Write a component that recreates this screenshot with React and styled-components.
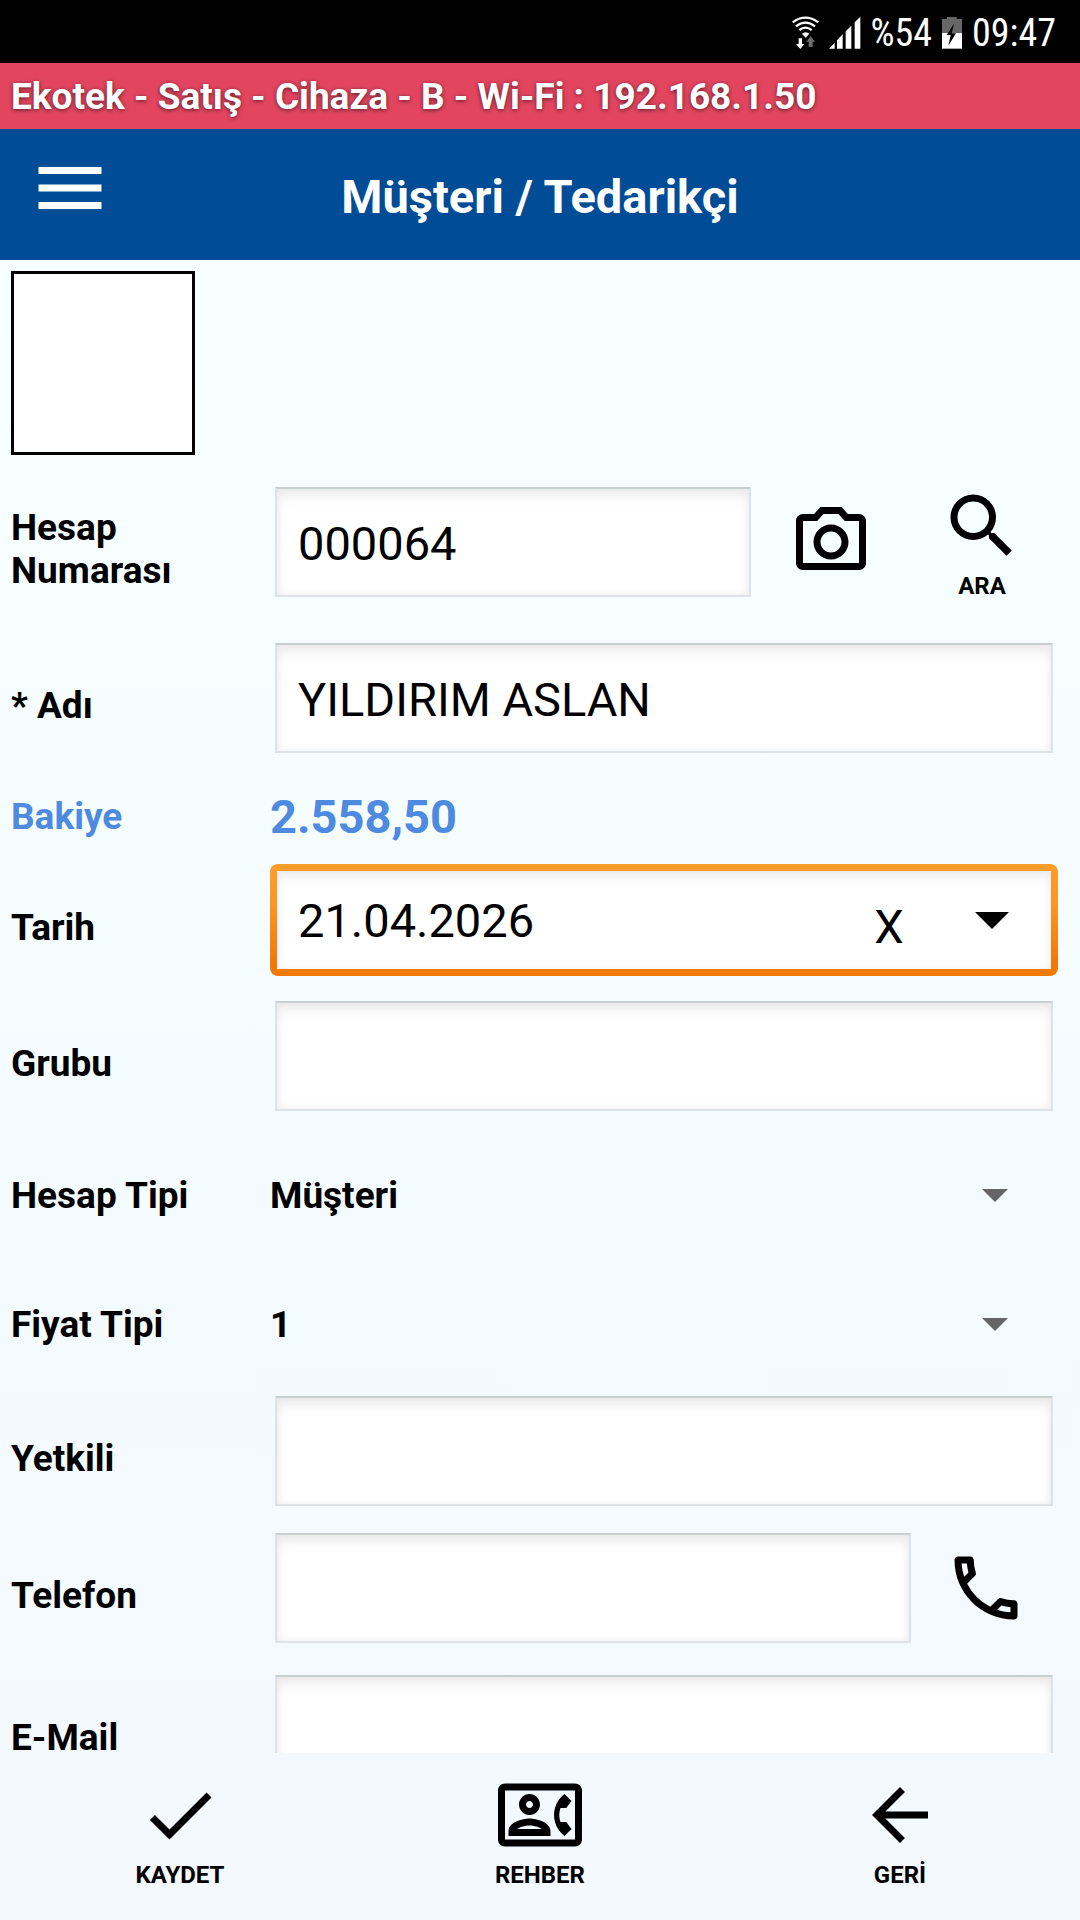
import styled, { createGlobalStyle, css } from "styled-components"
import {
  MdArrowBack,
  MdCheck,
  MdMenu,
  MdOutlineCall,
  MdOutlineCameraAlt,
  MdOutlineContactPhone,
  MdSearch,
} from "react-icons/md"

const GlobalStyle = createGlobalStyle`
  * {
    box-sizing: border-box;
  }

  body {
    margin: 0;
    font-family: Roboto, sans-serif;
    color: #000;
  }

  button, input, select {
    font-family: inherit;
    color: inherit;
    margin: 0;
    padding: 0;
  }
`;

const Screen = styled.div`
  display: flex;
  flex-direction: column;
  height: 100vh;
  background: #f4f8ff;
`;

const StatusBar = styled.div`
  display: flex;
  align-items: center;
  justify-content: flex-end;
  gap: 10px;
  height: 63px;
  padding: 2px 24px 0;
  background: #000;
  color: #fff;
  font-family: "Roboto Condensed", Roboto, sans-serif;
  font-size: 38px;
`;

const ConnectionBar = styled.div`
  height: 66px;
  padding: 1px 11px 0;
  background: #e3455f;
  color: #fff;
  font-size: 37px;
  font-weight: 700;
  line-height: 66px;
  text-shadow: 0 1px 4px rgba(0, 0, 0, 0.6);
  white-space: nowrap;
`;

const Header = styled.header`
  display: grid;
  grid-template-columns: 112px 1fr 112px;
  align-items: center;
  height: 131px;
  background: #004c97;
  color: #fff;
`;

const Title = styled.h1`
  margin: 0;
  padding-top: 4px;
  font-size: 47px;
  font-weight: 700;
  text-align: center;
`;

const IconButton = styled.button`
  display: flex;
  flex: none;
  flex-direction: column;
  align-items: center;
  justify-content: center;
  gap: 4px;
  border: 0;
  background: none;
  font-size: 24px;
  font-weight: 700;
  line-height: 28px;

  svg {
    width: 84px;
    height: 84px;
    flex: none;
  }
`;

const MenuButton = styled(IconButton)`
  width: 84px;
  margin-left: 28px;
  padding-bottom: 14px;
`;

const CameraButton = styled(IconButton)`
  width: 160px;
`;

const SearchButton = styled(IconButton)`
  width: 142px;
`;

const CallButton = styled(IconButton)`
  width: 142px;
  padding-left: 8px;
`;

const Form = styled.form`
  flex: 1;
  min-height: 0;
  overflow: hidden;
  padding: 11px 22px 0 11px;
  background: linear-gradient(#f7ffff, #f4fcff 55%, #f4f9ff);
`;

const Photo = styled.div`
  width: 184px;
  height: 184px;
  margin-bottom: 16px;
  border: 3px solid #000;
  background: #fff;
`;

const Row = styled.div`
  display: grid;
  grid-template-columns: 259px minmax(0, 1fr);
  align-items: center;
  height: ${props => props.$height};
`;

const labelText = css`
  font-size: 37px;
  font-weight: 700;
  line-height: 43px;
`;

const Label = styled.label`
  ${labelText}
  padding-top: 14px;
`;

const PlainLabel = styled.label`
  ${labelText}
  color: ${props => props.$color || 'inherit'};
`;

const Controls = styled.div`
  display: flex;
  align-items: center;
  height: 110px;
  padding: 0 5px;
`;

const TextInput = styled.input`
  flex: 1;
  width: 100%;
  min-width: 0;
  height: 110px;
  padding: 2px 21px 0;
  border: 2px solid #dce2e5;
  border-top-color: #c8cfd1;
  border-radius: 0;
  background: #fff;
  box-shadow: inset 0 8px 16px -4px #e6e6e6, inset 0 0 10px #f2f2f2;
  font-size: 47px;
  outline: none;
`;

const Balance = styled.output`
  color: #4d8ae0;
  font-size: 47px;
  font-weight: 700;
`;

const DateBox = styled.div`
  display: flex;
  align-items: center;
  height: 112px;
  border: 7px solid transparent;
  border-radius: 8px;
  background:
    linear-gradient(#fff, #fff) padding-box,
    linear-gradient(#fd9d2a, #fb9725 35%, #f17905 90%) border-box;
  box-shadow: inset 0 8px 14px -4px #e9e9e9, inset 0 0 10px #f2f2f2;
`;

const DateInput = styled.input`
  flex: 1;
  width: 100%;
  min-width: 0;
  padding-left: 21px;
  border: 0;
  background: none;
  font-size: 47px;
  outline: none;
`;

const ClearButton = styled.button`
  flex: none;
  width: 88px;
  padding-top: 12px;
  border: 0;
  background: none;
  font-size: 47px;
`;

const OpenButton = styled.button`
  display: flex;
  flex: none;
  justify-content: center;
  width: 118px;
  border: 0;
  background: none;
`;

const SelectRows = styled.div`
  padding-top: 10px;
`;

const SelectBox = styled.div`
  display: grid;
  align-items: center;
  height: 100%;

  > * {
    grid-area: 1 / 1;
  }

  svg {
    justify-self: end;
    margin-right: 50px;
    pointer-events: none;
  }
`;

const Select = styled.select`
  ${labelText}
  width: 100%;
  appearance: none;
  border: 0;
  background: none;
  outline: none;
`;

const Footer = styled.footer`
  display: grid;
  grid-template-columns: repeat(3, 1fr);
  height: 167px;
  padding: 8px 0 20px;
  background: #f4f8ff;
`;

const WifiIcon = () => (
  <svg width="27" height="34" viewBox="0 0 81 102">
    <g fill="none" stroke="#fff" strokeWidth="7">
      <path d="M2 19Q40-9 79 19" />
      <path d="M12 31Q40 9 69 31" />
      <path d="M22 42Q40 28 59 42" />
    </g>
    <path d="M30 53q11-9 22 0l-11 12z" fill="#fff" />
    <path d="M20 67h10v17h7L25 99 12 84h8z" fill="#fff" />
    <path d="M56 61l13 16h-7v16H50V77h-7z" fill="#6b6b6b" />
  </svg>
)

const SignalIcon = () => (
  <svg width="32" height="33" viewBox="0 0 96 99" fill="#fff">
    <path d="M0 98L17 80v18zM24 73l17-18v43H24zM50 46l17-17v69H50zM77 19L94 2v96H77z" />
  </svg>
)

const BatteryIcon = () => (
  <svg width="20" height="32" viewBox="0 0 60 96">
    <path d="M0 6h15V0h29v6h16v42H0z" fill="#666" />
    <path d="M0 48h60v47H0z" fill="#fff" />
    <path d="M36 20L14 54h12l-7 32 23-37H29z" fill="#000" />
  </svg>
)

const Caret = ({ width, height, color }) => (
  <svg width={width} height={height} viewBox="0 0 10 5">
    <path d="M0 0h10L5 5z" fill={color} />
  </svg>
)

export default () => {
  const actions = [
    { name: 'KAYDET', Icon: MdCheck },
    { name: 'REHBER', Icon: MdOutlineContactPhone },
    { name: 'GERİ', Icon: MdArrowBack },
  ];

  return (
    <>
      <GlobalStyle />
      <Screen lang="tr">
        <StatusBar>
          <WifiIcon />
          <SignalIcon />
          <span>%54</span>
          <BatteryIcon />
          <span>09:47</span>
        </StatusBar>

        <ConnectionBar>Ekotek - Satış - Cihaza - B - Wi-Fi : 192.168.1.50</ConnectionBar>

        <Header>
          <MenuButton type="button" aria-label="Menü">
            <MdMenu />
          </MenuButton>
          <Title>Müşteri / Tedarikçi</Title>
        </Header>

        <Form>
          <Photo />

          <Row $height="142px">
            <Label htmlFor="hesapNo">Hesap<br />Numarası</Label>
            <Controls>
              <TextInput id="hesapNo" defaultValue="000064" />
              <CameraButton type="button" aria-label="Kamera">
                <MdOutlineCameraAlt />
              </CameraButton>
              <SearchButton type="button">
                <MdSearch />
                ARA
              </SearchButton>
            </Controls>
          </Row>

          <Row $height="170px">
            <Label htmlFor="adi">* Adı</Label>
            <Controls>
              <TextInput id="adi" defaultValue="YILDIRIM ASLAN" />
            </Controls>
          </Row>

          <Row $height="66px">
            <PlainLabel htmlFor="bakiye" $color="#4d8ae0">Bakiye</PlainLabel>
            <Balance id="bakiye">2.558,50</Balance>
          </Row>

          <Row $height="142px">
            <Label htmlFor="tarih">Tarih</Label>
            <DateBox>
              <DateInput id="tarih" defaultValue="21.04.2026" />
              <ClearButton type="button">X</ClearButton>
              <OpenButton type="button" aria-label="Takvim">
                <Caret width={34} height={17} color="#000" />
              </OpenButton>
            </DateBox>
          </Row>

          <Row $height="130px">
            <Label htmlFor="grubu">Grubu</Label>
            <Controls>
              <TextInput id="grubu" />
            </Controls>
          </Row>

          <SelectRows>
            <Row $height="129px">
              <PlainLabel htmlFor="hesapTipi">Hesap Tipi</PlainLabel>
              <SelectBox>
                <Select id="hesapTipi">
                  <option>Müşteri</option>
                </Select>
                <Caret width={26} height={13} color="#636566" />
              </SelectBox>
            </Row>

            <Row $height="129px">
              <PlainLabel htmlFor="fiyatTipi">Fiyat Tipi</PlainLabel>
              <SelectBox>
                <Select id="fiyatTipi">
                  <option>1</option>
                </Select>
                <Caret width={26} height={13} color="#636566" />
              </SelectBox>
            </Row>
          </SelectRows>

          <Row $height="124px">
            <Label htmlFor="yetkili">Yetkili</Label>
            <Controls>
              <TextInput id="yetkili" />
            </Controls>
          </Row>

          <Row $height="150px">
            <Label htmlFor="telefon">Telefon</Label>
            <Controls>
              <TextInput id="telefon" type="tel" />
              <CallButton type="button" aria-label="Telefon et">
                <MdOutlineCall />
              </CallButton>
            </Controls>
          </Row>

          <Row $height="134px">
            <Label htmlFor="email">E-Mail</Label>
            <Controls>
              <TextInput id="email" type="email" />
            </Controls>
          </Row>
        </Form>

        <Footer>
          {
            actions.map(({ name, Icon }) => (
              <IconButton key={name} type="button">
                <Icon />
                {name}
              </IconButton>
            ))
          }
        </Footer>
      </Screen>
    </>
  )
}
